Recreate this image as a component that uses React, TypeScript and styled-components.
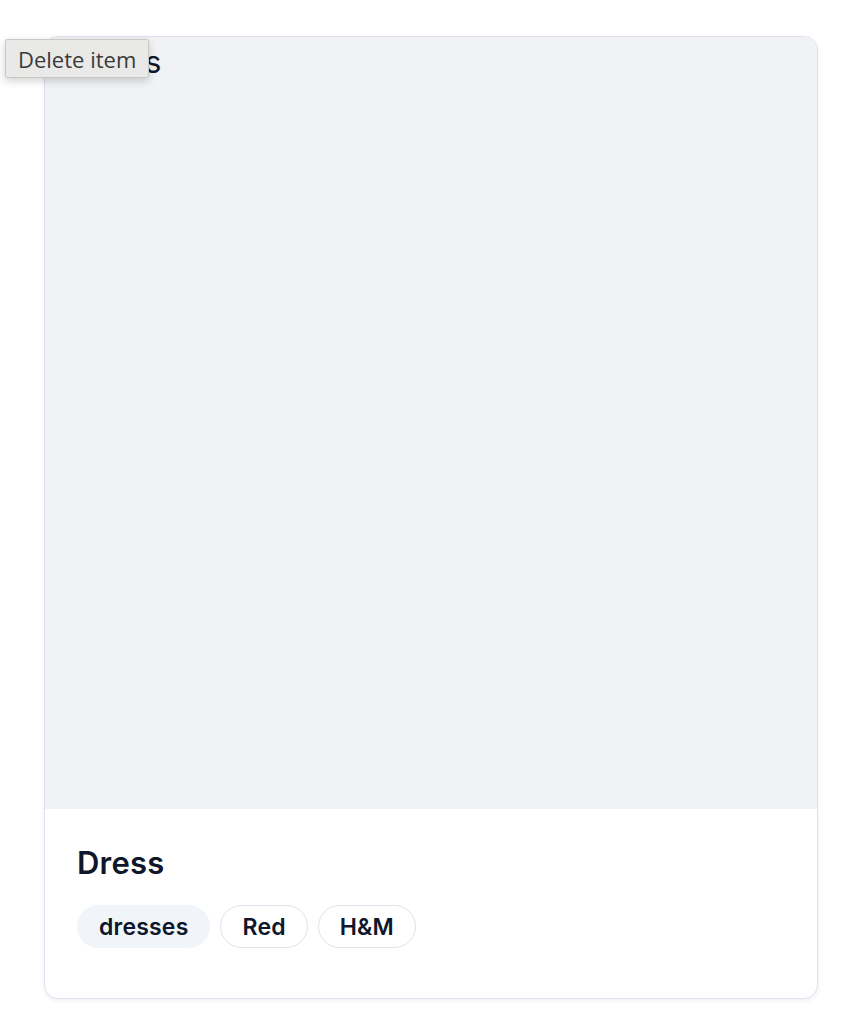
import React from 'react';
import styled, { createGlobalStyle } from 'styled-components';

const GlobalStyle = createGlobalStyle`
  html, body {
    margin: 0;
    padding: 0;
    background: #ffffff;
  }
  body {
    font-family: Inter, 'Noto Sans', sans-serif;
    color: #0f172a;
  }
`;

const Page = styled.div`
  position: relative;
  padding: 36px 36px 32px 44px;
`;

const Card = styled.article`
  border: 1.5px solid #dfe2ee;
  border-radius: 14px;
  overflow: hidden;
  background: #ffffff;
  box-shadow: 0 2px 4px rgba(15, 23, 42, 0.06);
`;

const ImageArea = styled.div`
  position: relative;
  box-sizing: border-box;
  aspect-ratio: 1 / 1;
  background: #f1f2f4;
  display: flex;
  align-items: flex-start;
  gap: 4px;
  padding: 2px 0 0 10px;
`;

const BrokenIcon = styled.span`
  width: 16px;
  height: 16px;
  border: 1.5px solid #9b9ba0;
  border-radius: 4px;
  background: #d9d9dc;
`;

const AltText = styled.span`
  font-size: 31px;
  line-height: 46px;
  color: #0f172a;
`;

const Body = styled.div`
  padding: 34px 32px 50px;
`;

const Title = styled.h2`
  margin: 0 0 22px;
  font-size: 31px;
  font-weight: 600;
  line-height: 40px;
  letter-spacing: 0.2px;
  color: #0f172a;
`;

const Tags = styled.div`
  display: flex;
  gap: 10px;
`;

const Tag = styled.span<{ $filled?: boolean }>`
  display: inline-flex;
  align-items: center;
  height: 43px;
  box-sizing: border-box;
  padding: 0 21px;
  border-radius: 999px;
  font-size: 23px;
  font-weight: 600;
  letter-spacing: 0.2px;
  color: #0f172a;
  background: ${(p) => (p.$filled ? '#f1f5f9' : '#ffffff')};
  border: 1.5px solid ${(p) => (p.$filled ? '#f1f5f9' : '#dde2ec')};
`;

const Tooltip = styled.div`
  position: absolute;
  left: 5px;
  top: 39px;
  height: 39px;
  box-sizing: border-box;
  padding: 0 12px;
  display: flex;
  align-items: center;
  background: #e9e9e7;
  border: 1px solid #c9c9c6;
  border-radius: 2px;
  box-shadow: 0 3px 8px rgba(0, 0, 0, 0.18);
  font-family: 'Open Sans', 'Liberation Sans', sans-serif;
  font-size: 22px;
  color: #3a3a3a;
  white-space: nowrap;
`;

export default function App() {
  return (
    <>
      <GlobalStyle />
      <Page>
        <Card>
          <ImageArea>
            <BrokenIcon />
            <AltText>Dress</AltText>
          </ImageArea>
          <Body>
            <Title>Dress</Title>
            <Tags>
              <Tag $filled>dresses</Tag>
              <Tag>Red</Tag>
              <Tag>H&amp;M</Tag>
            </Tags>
          </Body>
        </Card>
        <Tooltip>Delete item</Tooltip>
      </Page>
    </>
  );
}
